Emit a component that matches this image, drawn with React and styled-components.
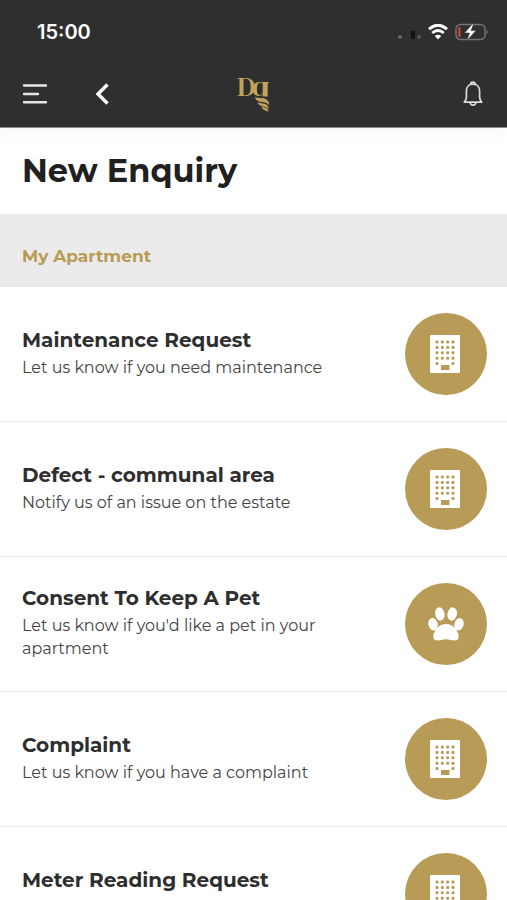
import React from 'react';
import styled, { createGlobalStyle } from 'styled-components';

const GlobalStyle = createGlobalStyle`
    * {
        box-sizing: border-box;
    }

    html {
        scrollbar-width: none;
    }

    body {
        margin: 0;
        background: #fff;
        color: #2e2e2e;
        font-family: Montserrat, Inter, sans-serif;
    }
`;

const Header = styled.header`
    background: #2f2f2f;
    color: #fff;
    border-bottom: 1px solid #8c8c8c;
    box-shadow: 0 4px 16px rgba(0, 0, 0, 0.04);
`;

const StatusBar = styled.div`
    display: flex;
    justify-content: space-between;
    align-items: center;
    height: 64px;
    padding: 0 18px 0 37px;
`;

const Clock = styled.time`
    font-family: Inter, sans-serif;
    font-size: 20px;
    font-weight: 600;
    line-height: 24px;
`;

const StatusIcons = styled.div`
    display: flex;
    align-items: center;
    gap: 7px;
`;

const NavBar = styled.nav`
    display: grid;
    grid-template-columns: 1fr auto 1fr;
    align-items: center;
    height: 63px;
    padding: 0 24px 4px 22px;
`;

const NavGroup = styled.div`
    display: flex;
    align-items: center;
    justify-content: ${({ $end }) => ($end ? 'flex-end' : 'flex-start')};
    gap: 47px;
`;

const IconButton = styled.button`
    display: flex;
    padding: 0;
    border: 0;
    background: none;
    color: inherit;
    cursor: pointer;
`;

const PageTitle = styled.h1`
    margin: 0;
    padding: 22px 22px 23px;
    color: #202020;
    font-size: 32px;
    font-weight: 700;
    line-height: 41px;
`;

const SectionTitle = styled.h2`
    margin: 0;
    padding: 30px 22px 19px;
    background: #ebebeb;
    color: #b99b56;
    font-size: 17px;
    font-weight: 700;
    line-height: 24px;
`;

const EnquiryList = styled.ul`
    margin: 0;
    padding: 0;
    list-style: none;
`;

const EnquiryItem = styled.li`
    border-bottom: 1px solid #ebebeb;
`;

const EnquiryLink = styled.a`
    display: flex;
    justify-content: space-between;
    align-items: center;
    gap: 64px;
    min-height: 134px;
    padding: 0 20px 0 22px;
    color: inherit;
    text-decoration: none;
`;

const EnquiryText = styled.div`
    padding-bottom: 5px;
`;

const EnquiryName = styled.h3`
    margin: 0;
    font-size: 20px;
    font-weight: 700;
    line-height: 31px;
`;

const EnquiryInfo = styled.p`
    margin: 0;
    color: #444;
    font-size: 16px;
    line-height: 23px;
`;

const IconCircle = styled.span`
    display: flex;
    flex: none;
    justify-content: center;
    align-items: center;
    width: 82px;
    height: 82px;
    border-radius: 50%;
    background: #b79b56;
`;

const SignalIcon = () => (
    <svg width="24" height="18" viewBox="0 0 24 18" aria-hidden="true">
        <circle cx="3" cy="14" r="2" fill="#666" />
        <rect x="14" y="8" width="4" height="8" rx="1" fill="#111" />
        <circle cx="22" cy="14" r="2" fill="#555" />
    </svg>
);

const WifiIcon = () => (
    <svg width="20" height="16" viewBox="0 0 20 16" fill="none" stroke="#fff" aria-hidden="true">
        <path d="M1 5.2Q10-2.8 19 5.2" strokeWidth="3" />
        <path d="M4.2 9Q10 4 15.8 9" strokeWidth="2.8" />
        <path d="M10 15.5 6.8 12.1Q10 9.4 13.2 12.1Z" fill="#fff" stroke="none" />
    </svg>
);

const BatteryIcon = () => (
    <svg width="34" height="18" viewBox="0 0 34 18" aria-hidden="true">
        <rect x="1" y="1.5" width="29" height="15" rx="4.5" fill="none" stroke="#747474" strokeWidth="1.5" />
        <path d="M31.5 6.5Q34 9 31.5 11.5Z" fill="#747474" />
        <rect x="3" y="4" width="2.6" height="10" rx="1" fill="#b8443a" />
        <path d="M17.5 1 9.5 10h5L12 17.4 21 7.6h-5L18.6 1Z" fill="#fff" stroke="#2f2f2f" strokeWidth="0.5" />
    </svg>
);

const MenuIcon = () => (
    <svg width="26" height="22" viewBox="0 0 26 22" stroke="#e6e6e6" strokeWidth="2.4" strokeLinecap="round" aria-hidden="true">
        <path d="M2 2.5h22M2 11h14M2 19.2h22" />
    </svg>
);

const BackIcon = () => (
    <svg width="14" height="22" viewBox="0 0 14 22" fill="none" stroke="#fff" strokeWidth="3.4" aria-hidden="true">
        <path d="M12.500 1.500 3 11l9.500 9.500" />
    </svg>
);

const BellIcon = () => (
    <svg width="20" height="26" viewBox="0 0 20 26" fill="none" stroke="#dcdcdc" strokeWidth="1.7" strokeLinejoin="round" aria-hidden="true">
        <path d="M7.600 3.600a2.400 2.400 0 0 1 4.800 0" />
        <path d="M10 3.200c-4 0-6.600 2.700-6.600 6.800v6.500c0 1.700-.8 2.900-2.100 4.700h17.400c-1.300-1.800-2.100-3-2.100-4.700V10c0-4.100-2.600-6.800-6.600-6.800Z" />
        <path d="M7.200 21.500c.3 3.600 5.300 3.600 5.600 0" />
    </svg>
);

const Logo = () => (
    <svg width="34" height="36" viewBox="0 0 34 36" fill="#c2a35c" role="img" aria-label="Dg">
        <path d="M1.500 2h8.500c5.500 0 8.500 3.500 8.500 9s-3 9-8.500 9H1.500v-.8H3.500V2.800H1.500ZM7.500 2.800v16.400H9.500c4 0 5.200-3 5.200-8.200S13.500 2.800 9.500 2.800Z" fillRule="evenodd" />
        <path d="M24 6c-4.500 0-7.500 2.500-7.500 7s3 7 6 7c2 0 3.300-.6 4.200-1.700V20.500h5V7.500l1.800-1.500ZM24 6.800h2.700v10.500c-.8 1.200-1.700 1.800-2.800 1.800-2.100 0-3-2-3-6.100s1-6.200 3.100-6.200Z" fillRule="evenodd" />
        <path d="M19 20.500c1.500 1.600 4 1.400 7 1.600 4.600.3 7.300 3 7.300 7.200-2.200-2.600-4.500-3-7.300-3.300-4-.4-6.600-2-7-5.500Z" />
        <path d="M21.500 26c1.700 1.100 3.500 1.100 5.500 1.400 3.600.5 5.800 2.300 6.100 5.600-2-1.700-3.700-2.100-5.900-2.500-3-.5-5-1.800-5.700-4.500Z" />
        <path d="M25.500 30.800c3.500.7 6.500 1.200 7.100 4.700-3.200-.5-6-1.600-7.100-4.700Z" />
    </svg>
);

const windowRows = [7, 12.4, 17.8, 23.2];
const windowCols = [7, 12.3, 17.7, 23];

const BuildingIcon = () => (
    <svg width="32" height="38" viewBox="0 0 32 38" aria-hidden="true">
        <rect width="30" height="38" rx="1" fill="#fff" />
        <g fill="#b79b56">
            {windowRows.map((y) => windowCols.map((x) => (
                <rect key={`${x}-${y}`} x={x - 1.5} y={y - 1.5} width="3" height="3" rx="1.2" />
            )))}
            <rect x="5.500" y="27" width="3" height="3" rx="1.200" />
            <rect x="21.500" y="27" width="3" height="3" rx="1.200" />
            <rect x="11" y="30" width="8.500" height="5" rx="0.500" />
        </g>
    </svg>
);

const PawIcon = () => (
    <svg width="36" height="34" viewBox="0 0 36 34" fill="#fff" aria-hidden="true">
        <ellipse cx="11.800" cy="7" rx="4.700" ry="6.700" transform="rotate(-10 11.800 7)" />
        <ellipse cx="24.200" cy="7" rx="4.700" ry="6.700" transform="rotate(10 24.200 7)" />
        <ellipse cx="5" cy="17.300" rx="4.600" ry="6.300" transform="rotate(-16 5 17.300)" />
        <ellipse cx="31" cy="17.300" rx="4.600" ry="6.300" transform="rotate(16 31 17.300)" />
        <path d="M18 17c5.200 0 8.800 2.800 11.500 8 2.300 4.700 1.200 8.500-2.600 8.500-3.300 0-5.600-1.300-8.900-1.300S12.400 33.500 9.100 33.500c-3.800 0-4.900-3.800-2.600-8.500C9.200 19.800 12.800 17 18 17Z" />
    </svg>
);

const enquiries = [
    { name: 'Maintenance Request', info: 'Let us know if you need maintenance', Icon: BuildingIcon },
    { name: 'Defect - communal area', info: 'Notify us of an issue on the estate', Icon: BuildingIcon },
    { name: 'Consent To Keep A Pet', info: "Let us know if you'd like a pet in your apartment", Icon: PawIcon },
    { name: 'Complaint', info: 'Let us know if you have a complaint', Icon: BuildingIcon },
    { name: 'Meter Reading Request', info: 'Let us know if you want a meter read', Icon: BuildingIcon },
];

const App = () => {
    return <>
        <GlobalStyle />
        <Header>
            <StatusBar>
                <Clock>15:00</Clock>
                <StatusIcons>
                    <SignalIcon />
                    <WifiIcon />
                    <BatteryIcon />
                </StatusIcons>
            </StatusBar>
            <NavBar>
                <NavGroup>
                    <IconButton type="button" aria-label="Menu"><MenuIcon /></IconButton>
                    <IconButton type="button" aria-label="Back"><BackIcon /></IconButton>
                </NavGroup>
                <Logo />
                <NavGroup $end>
                    <IconButton type="button" aria-label="Notifications"><BellIcon /></IconButton>
                </NavGroup>
            </NavBar>
        </Header>
        <main>
            <PageTitle>New Enquiry</PageTitle>
            <SectionTitle>My Apartment</SectionTitle>
            <EnquiryList>
                {enquiries.map(({ name, info, Icon }) => (
                    <EnquiryItem key={name}>
                        <EnquiryLink href="#">
                            <EnquiryText>
                                <EnquiryName>{name}</EnquiryName>
                                <EnquiryInfo>{info}</EnquiryInfo>
                            </EnquiryText>
                            <IconCircle><Icon /></IconCircle>
                        </EnquiryLink>
                    </EnquiryItem>
                ))}
            </EnquiryList>
        </main>
    </>
}

export default App;
